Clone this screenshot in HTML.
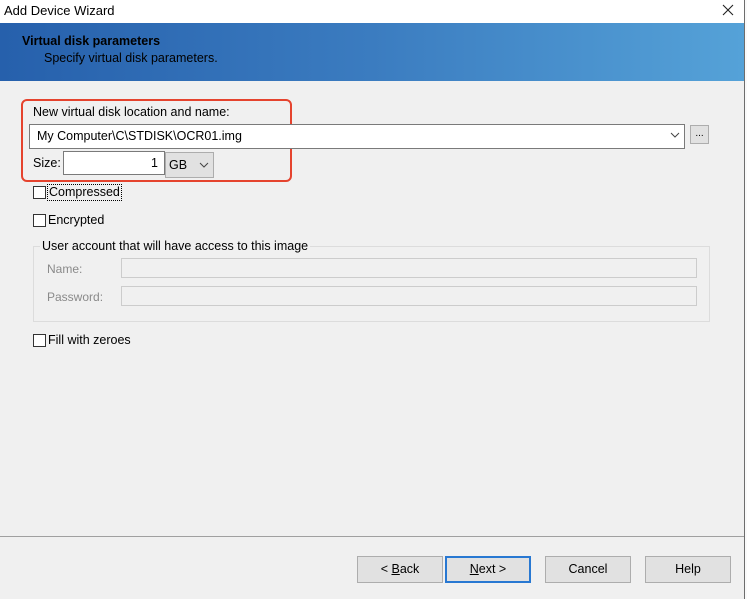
<!DOCTYPE html>
<html><head><style>
*{margin:0;padding:0;box-sizing:border-box}
body{width:747px;height:599px;background:#f0f0f0;font-family:"Liberation Sans","Noto Sans CJK SC",sans-serif;font-size:12px;color:#000;position:relative;overflow:hidden}
.a{position:absolute}
.cb{position:absolute;width:13px;height:13px;border:1px solid #333;background:#fff}
.btn{position:absolute;top:556px;width:86px;height:27px;background:#e1e1e1;border:1px solid #adadad;text-align:center;line-height:25px;font-size:12.5px}
</style></head><body>
<div class="a" style="left:0;top:0;width:744px;height:23px;background:#fff"></div>
<div class="a" style="left:4px;top:3px;font-size:13px">Add Device Wizard</div>
<svg class="a" style="left:722px;top:4px" width="12" height="12"><path d="M1 1 L11 11 M11 1 L1 11" stroke="#222" stroke-width="1.1"/></svg>
<div class="a" style="left:0;top:23px;width:744px;height:58px;background:linear-gradient(90deg,#2660ac,#3b7cc0 50%,#55a2d8)"></div>
<div class="a" style="left:22px;top:34px;font-weight:bold;font-size:12.5px">Virtual disk parameters</div>
<div class="a" style="left:44px;top:51px;font-size:12.5px">Specify virtual disk parameters.</div>
<div class="a" style="left:744px;top:0;width:1px;height:599px;background:#6d6d6d"></div>
<div class="a" style="left:745px;top:0;width:2px;height:599px;background:#fafafa"></div>

<div class="a" style="left:21px;top:99px;width:271px;height:83px;border:2px solid #e5432e;border-radius:6px"></div>
<div class="a" style="left:33px;top:105px;font-size:12.5px">New virtual disk location and name:</div>
<div class="a" style="left:29px;top:124px;width:656px;height:25px;background:#fff;border:1px solid #7a7a7a"></div>
<div class="a" style="left:37px;top:129px;font-size:12.5px">My Computer\C\STDISK\OCR01.img</div>
<svg class="a" style="left:670px;top:131px" width="10" height="8"><path d="M1 2 L5 6 L9 2" stroke="#444" fill="none"/></svg>
<div class="a" style="left:690px;top:125px;width:19px;height:19px;background:#e1e1e1;border:1px solid #adadad;font-size:10px;text-align:center;line-height:16px">...</div>
<div class="a" style="left:33px;top:156px;font-size:12.5px">Size:</div>
<div class="a" style="left:63px;top:151px;width:102px;height:24px;background:#fff;border:1px solid #7a7a7a"></div>
<div class="a" style="left:151px;top:156px;font-size:12.5px">1</div>
<div class="a" style="left:165px;top:152px;width:49px;height:26px;background:#e1e1e1;border:1px solid #adadad"></div>
<div class="a" style="left:169px;top:158px;font-size:12.5px">GB</div>
<svg class="a" style="left:199px;top:161px" width="10" height="8"><path d="M1 2 L5 6 L9 2" stroke="#444" fill="none"/></svg>

<div class="cb" style="left:33px;top:186px"></div>
<div class="a" style="left:47px;top:184px;border:1px dotted #000;padding:0 1px;font-size:12.5px;line-height:15px">Compressed</div>
<div class="cb" style="left:33px;top:214px"></div>
<div class="a" style="left:48px;top:213px;font-size:12.5px">Encrypted</div>

<div class="a" style="left:33px;top:246px;width:677px;height:76px;border:1px solid #dcdcdc"></div>
<div class="a" style="left:40px;top:239px;background:#f0f0f0;padding:0 2px;font-size:12.5px">User account that will have access to this image</div>
<div class="a" style="left:47px;top:262px;color:#8a8a8a;font-size:12px">Name:</div>
<div class="a" style="left:121px;top:258px;width:576px;height:20px;border:1px solid #ccc"></div>
<div class="a" style="left:47px;top:290px;color:#8a8a8a;font-size:12px">Password:</div>
<div class="a" style="left:121px;top:286px;width:576px;height:20px;border:1px solid #ccc"></div>

<div class="cb" style="left:33px;top:334px"></div>
<div class="a" style="left:48px;top:333px;font-size:12.5px">Fill with zeroes</div>

<div class="a" style="left:0;top:536px;width:744px;height:1px;background:#a0a0a0"></div>
<div class="btn" style="left:357px">&lt; <u>B</u>ack</div>
<div class="btn" style="left:445px;border:2px solid #2878d2;line-height:23px"><u>N</u>ext &gt;</div>
<div class="btn" style="left:545px">Cancel</div>
<div class="btn" style="left:645px">Help</div>
</body></html>
